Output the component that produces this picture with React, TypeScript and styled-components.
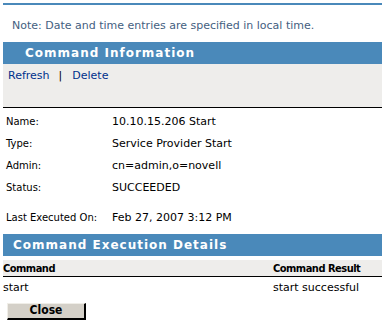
import React from "react";
import styled, { createGlobalStyle } from "styled-components";

const Global = createGlobalStyle`
  html, body { margin: 0; padding: 0; background: #ffffff; }
  body { font-family: "DejaVu Sans", Verdana, sans-serif; }
`;

const Page = styled.div`
  width: 382px;
  height: 322px;
  overflow: hidden;
  display: flex;
  flex-direction: column;
`;

const TopRule = styled.div`
  margin: 3px 0 0 3px;
  height: 2px;
  background: #4a89ba;
`;

const Note = styled.p`
  margin: 0;
  padding: 15px 0 0 12px;
  height: 22px;
  font-size: 11px;
  line-height: 12px;
  color: #44607f;
  white-space: nowrap;
`;

const SectionHeader = styled.div<{ $indent: number }>`
  margin-left: 3px;
  height: 22px;
  background: #4a89ba;
  color: #ffffff;
  font-weight: bold;
  font-size: 12px;
  letter-spacing: 1px;
  line-height: 22px;
  padding-left: ${(p) => p.$indent}px;
  white-space: nowrap;
`;

const ActionBar = styled.div`
  margin-left: 3px;
  background: #eeedeb;
  border-bottom: 1px solid #000000;
  display: flex;
  align-items: flex-start;
  padding: 5px 0 0 5px;
  box-sizing: border-box;
  height: 44px;
  font-size: 11px;
  line-height: 14px;
`;

const Link = styled.a`
  color: #00318c;
  text-decoration: none;
`;

const Sep = styled.span`
  color: #000000;
  margin: 0 10px 0 9px;
  font-size: 11px;
`;

const Details = styled.div`
  display: flex;
  flex-direction: column;
  padding: 2px 0 0 6px;
  margin-bottom: 6px;
`;

const Row = styled.div<{ $extra?: number }>`
  display: grid;
  grid-template-columns: 106px 1fr;
  height: 22px;
  align-items: center;
  margin-top: ${(p) => p.$extra ?? 0}px;
`;

const Label = styled.div`
  font-size: 10px;
  color: #000000;
  white-space: nowrap;
`;

const Value = styled.div`
  font-size: 11px;
  color: #000000;
  white-space: nowrap;
`;

const ResultTable = styled.div`
  display: grid;
  grid-template-columns: 270px 1fr;
  margin-left: 3px;
  margin-top: 4px;
`;

const HeadCell = styled.div`
  background: #eeedeb;
  border-bottom: 1px solid #000000;
  height: 16px;
  font-family: "DejaVu Sans Condensed", "DejaVu Sans", sans-serif;
  font-weight: bold;
  font-size: 11px;
  letter-spacing: -0.5px;
  line-height: 17px;
  color: #000000;
  white-space: nowrap;
`;

const Cell = styled.div`
  font-size: 11px;
  line-height: 16px;
  padding-top: 3px;
  color: #000000;
  white-space: nowrap;
`;

const Footer = styled.div`
  padding: 3px 0 0 7px;
`;

const Button = styled.button`
  width: 79px;
  height: 17px;
  padding: 0;
  background: #d4d0c8;
  border-style: solid;
  border-width: 1px 2px 2px 1px;
  border-color: #f0eee8 #000000 #000000 #f0eee8;
  font-family: "DejaVu Sans Condensed", "DejaVu Sans", sans-serif;
  font-weight: bold;
  font-size: 12px;
  line-height: 13px;
  color: #000000;
  cursor: pointer;
`;

const rows: [string, string, number][] = [
  ["Name:", "10.10.15.206 Start", 0],
  ["Type:", "Service Provider Start", 0],
  ["Admin:", "cn=admin,o=novell", 0],
  ["Status:", "SUCCEEDED", 0],
  ["Last Executed On:", "Feb 27, 2007 3:12 PM", 8],
];

export default function App() {
  return (
    <Page>
      <Global />
      <TopRule />
      <Note>Note: Date and time entries are specified in local time.</Note>
      <SectionHeader $indent={22}>Command Information</SectionHeader>
      <ActionBar>
        <Link href="#">Refresh</Link>
        <Sep>|</Sep>
        <Link href="#">Delete</Link>
      </ActionBar>
      <Details>
        {rows.map(([l, v, extra]) => (
          <Row key={l} $extra={extra}>
            <Label>{l}</Label>
            <Value>{v}</Value>
          </Row>
        ))}
      </Details>
      <SectionHeader $indent={10}>Command Execution Details</SectionHeader>
      <ResultTable>
        <HeadCell>Command</HeadCell>
        <HeadCell>Command Result</HeadCell>
        <Cell>start</Cell>
        <Cell>start successful</Cell>
      </ResultTable>
      <Footer>
        <Button>Close</Button>
      </Footer>
    </Page>
  );
}
